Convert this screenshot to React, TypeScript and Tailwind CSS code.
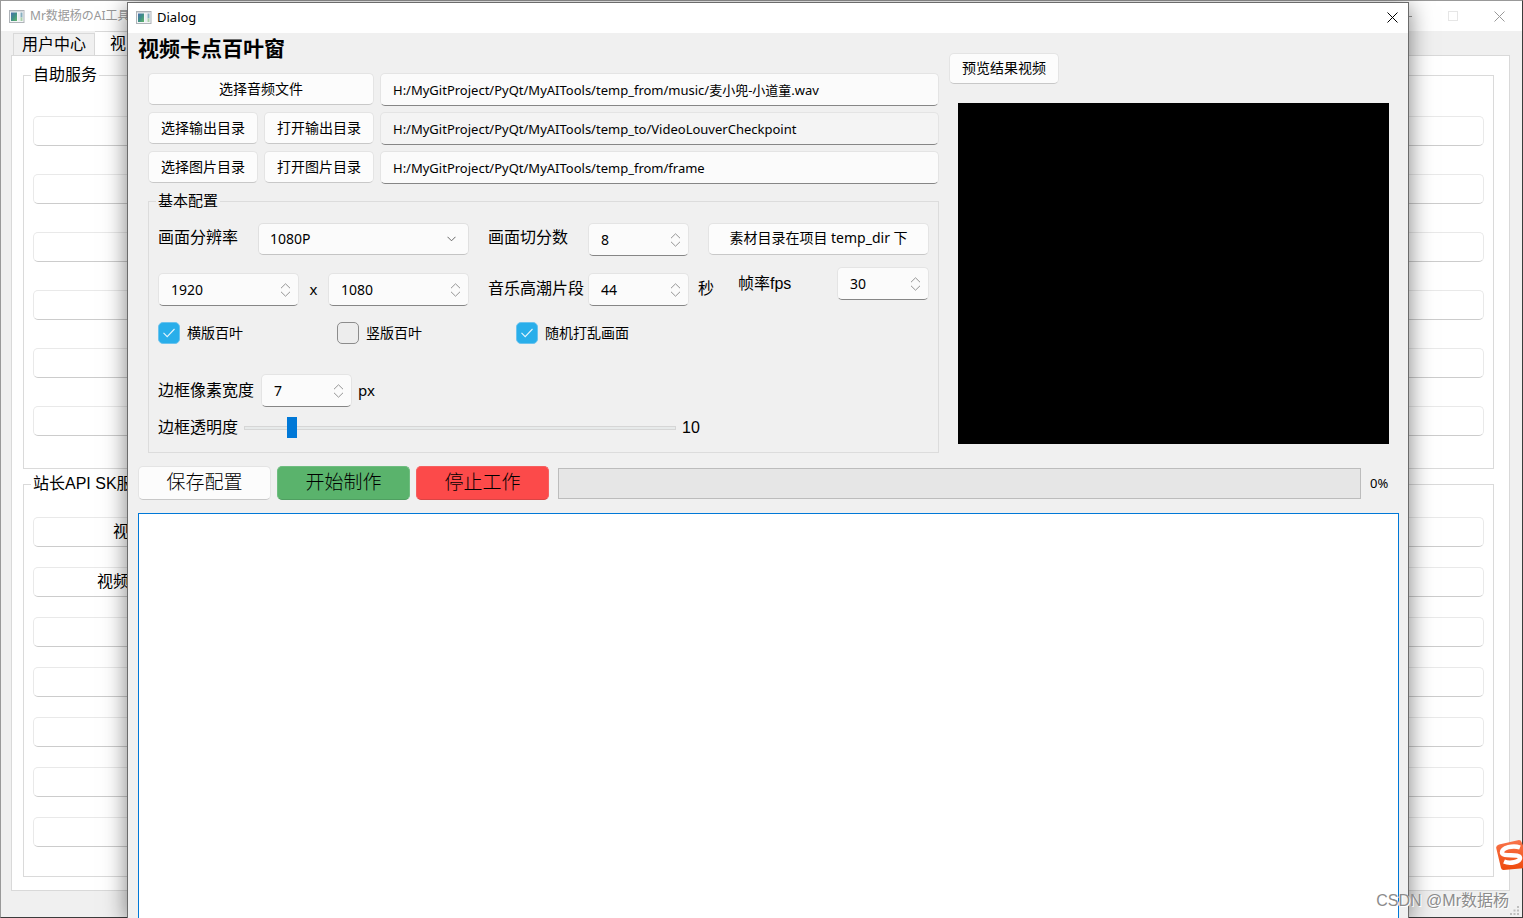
import React, { useState } from "react";

const UI = "font-['Noto_Sans','Noto_Sans_CJK_SC',sans-serif]";
const ARIAL = "font-['Liberation_Sans','Noto_Sans_CJK_SC',sans-serif]";

const fieldFrame =
  "rounded-[5px] border border-[#e4e4e4] border-b-[#868686] bg-[#fbfbfb]";
const buttonFrame =
  "rounded-[5px] border border-[#e4e4e4] border-b-[#c8c8c8] bg-[#fcfcfc] pb-[2px] hover:bg-white";

function AppIcon({ id }: { id: string }) {
  return (
    <svg width="16" height="13" viewBox="0 0 16 13" aria-hidden="true" className="shrink-0">
      <defs>
        <linearGradient id={id} x1="0" y1="0" x2="1" y2="1">
          <stop offset="0" stopColor="#4a6fb0" />
          <stop offset="0.5" stopColor="#3f8f86" />
          <stop offset="1" stopColor="#62b567" />
        </linearGradient>
      </defs>
      <rect x="0.5" y="0.5" width="14.5" height="12" fill="#f4f6f7" stroke="#aeb3b8" />
      <rect x="1" y="1" width="13.5" height="1" fill="#d5d9dd" />
      <rect x="2" y="2.5" width="6" height="8.5" fill={`url(#${id})`} />
      <rect x="9" y="2.5" width="2" height="8.5" fill="#e9edef" />
      <rect x="11.5" y="2.5" width="2" height="5" fill="#86aebf" />
      <rect x="11.5" y="7.5" width="2" height="3.5" fill="#a9cfa9" />
    </svg>
  );
}

function CloseIcon() {
  return (
    <svg width="11" height="11" viewBox="0 0 11 11" fill="none" stroke="currentColor" aria-hidden="true">
      <path d="M0.5 0.5l10 10M10.5 0.5l-10 10" />
    </svg>
  );
}

function Spin({ id, value, label, className }: { id: string; value: number; label?: string; className: string }) {
  const [v, setV] = useState(value);
  return (
    <div className={`flex h-[33px] shrink-0 items-center pl-3 pr-[7px] ${fieldFrame} ${className}`}>
      <input
        id={id}
        type="number"
        aria-label={label}
        value={v}
        onChange={(e) => setV(Number(e.target.value))}
        className={`min-w-0 flex-1 bg-transparent text-[14px] leading-5 outline-none [appearance:textfield] [&::-webkit-inner-spin-button]:appearance-none ${UI}`}
      />
      <div className="flex flex-col gap-[2px] text-[#949494]">
        <button type="button" aria-label="+" onClick={() => setV(v + 1)}>
          <svg width="11" height="6" viewBox="0 0 11 6" fill="none" stroke="currentColor" className="block">
            <path d="M1 5.2L5.5 0.8L10 5.2" />
          </svg>
        </button>
        <button type="button" aria-label="-" onClick={() => setV(v - 1)}>
          <svg width="11" height="6" viewBox="0 0 11 6" fill="none" stroke="currentColor" className="block">
            <path d="M1 0.8L5.5 5.2L10 0.8" />
          </svg>
        </button>
      </div>
    </div>
  );
}

function Check({ label, defaultChecked }: { label: string; defaultChecked?: boolean }) {
  return (
    <label className="flex w-[179px] items-center gap-[7px] text-[14px] leading-5">
      <span className="grid size-[22px] place-items-center">
        <input
          type="checkbox"
          defaultChecked={defaultChecked}
          className="peer col-start-1 row-start-1 size-[22px] appearance-none rounded-[5px] border border-[#8c8c8c] bg-[#ededed] checked:border-[#6cc3ee] checked:bg-[#29aeea]"
        />
        <svg
          width="12"
          height="10"
          viewBox="0 0 12 10"
          fill="none"
          stroke="#e4f5fd"
          className="pointer-events-none col-start-1 row-start-1 hidden peer-checked:block"
          aria-hidden="true"
        >
          <path d="M0.5 4.8L4.2 8.6L11.5 1" strokeWidth="1.1" />
        </svg>
      </span>
      {label}
    </label>
  );
}

function PathField({ value, label, readOnly }: { value: string; label: string; readOnly?: boolean }) {
  return (
    <input
      type="text"
      aria-label={label}
      defaultValue={value}
      readOnly={readOnly}
      className={`h-[33px] min-w-0 flex-1 px-3 text-[13px] outline-none read-only:bg-[#f4f4f4] ${fieldFrame}`}
    />
  );
}

function ServiceGroup({
  title,
  labels,
  className,
}: {
  title: string;
  labels: { text: string; pad: string }[];
  className: string;
}) {
  return (
    <fieldset className="border border-[#dadada] px-[9px]">
      <legend className="ml-[-2px] whitespace-nowrap px-[2px] text-[16px] leading-5">{title}</legend>
      <div className={`flex flex-col ${className}`}>
        {labels.map((l, i) => (
          <button
            key={i}
            type="button"
            aria-label={l.text || title}
            className={`h-[30px] rounded-[5px] border border-[#e9e9e9] border-b-[#cccccc] bg-white text-left text-[16px] leading-5 ${l.pad}`}
          >
            {l.text}
          </button>
        ))}
      </div>
    </fieldset>
  );
}

const blank = { text: "", pad: "px-4" };

function MainWindow() {
  return (
    <div className={`flex h-full flex-col border border-[#999] border-b-[#3c3c3c] border-r-[#3c3c3c] bg-[#f0f0f0] text-black ${ARIAL}`}>
      <header className="flex h-[30px] shrink-0 items-center bg-white pl-2 pr-[17px] text-[#999]">
        <AppIcon id="mainIcon" />
        <span className={`ml-[5px] text-[12px] leading-4 ${UI}`}>Mr数据杨のAI工具</span>
        <div className="ml-auto flex items-center gap-9">
          <button type="button" aria-label="最小化">
            <svg width="11" height="11" viewBox="0 0 11 11" stroke="currentColor" className="block" aria-hidden="true">
              <path d="M0 5.5h11" />
            </svg>
          </button>
          <button type="button" aria-label="最大化" className="text-[#e6e6e6]">
            <svg width="10" height="10" viewBox="0 0 10 10" fill="none" stroke="currentColor" className="block" aria-hidden="true">
              <rect x="0.5" y="0.5" width="9" height="9" />
            </svg>
          </button>
          <button type="button" aria-label="关闭">
            <CloseIcon />
          </button>
        </div>
      </header>
      <nav className="flex h-6 shrink-0 items-end pl-3 text-[16px] leading-5">
        <button type="button" className="h-[22px] border border-b-0 border-[#d9d9d9] px-2">
          用户中心
        </button>
        <button type="button" className="h-6 border border-b-0 border-l-0 border-[#d9d9d9] bg-white px-[15px]">
          视
        </button>
      </nav>
      <main className="ml-[10px] mr-3 flex flex-col gap-[5px] border border-[#d9d9d9] bg-white pb-[13px] pl-[11px] pr-[15px] pt-[9px]">
        <ServiceGroup
          title="自助服务"
          labels={[blank, blank, blank, blank, blank, blank]}
          className="gap-7 pb-8 pt-[31px]"
        />
        <ServiceGroup
          title="站长API SK服"
          labels={[{ text: "视", pad: "pl-[79px]" }, { text: "视频", pad: "pl-[63px]" }, blank, blank, blank, blank, blank]}
          className="gap-5 pb-[29px] pt-[23px]"
        />
      </main>
    </div>
  );
}

function Dialog() {
  const [opacity, setOpacity] = useState(10);
  return (
    <section
      role="dialog"
      aria-label="Dialog"
      className={`absolute bottom-0 left-[127px] right-[114px] top-[2px] flex flex-col border border-b-0 border-[#6b6b6b] bg-[#f0f0f0] text-black shadow-[0_4px_22px_rgba(0,0,0,0.5)] ${UI}`}
    >
      <header className="flex h-[30px] shrink-0 items-center bg-white pb-[2px] pl-2 pr-[10px]">
        <AppIcon id="dialogIcon" />
        <span className="ml-[5px] text-[13px] leading-5">Dialog</span>
        <button type="button" aria-label="关闭" className="ml-auto">
          <CloseIcon />
        </button>
      </header>

      <div className="flex min-h-0 flex-1 flex-col pl-[10px] pr-[9px]">
        <div className="flex gap-[10px]">
          <div className="min-w-0 flex-1">
            <h1 className="mb-[10px] text-[21px] font-bold leading-[30px]">视频卡点百叶窗</h1>
            <div className="pl-[10px]">
              <div className="flex flex-col gap-[6px]">
                <div className="flex gap-[6px]">
                  <button type="button" className={`h-8 w-[226px] text-[14px] ${buttonFrame}`}>
                    选择音频文件
                  </button>
                  <PathField label="音频文件" value="H:/MyGitProject/PyQt/MyAITools/temp_from/music/麦小兜-小道童.wav" />
                </div>
                <div className="flex gap-[6px]">
                  <div className="grid w-[226px] grid-cols-2 gap-[6px]">
                    <button type="button" className={`h-8 text-[14px] ${buttonFrame}`}>选择输出目录</button>
                    <button type="button" className={`h-8 text-[14px] ${buttonFrame}`}>打开输出目录</button>
                  </div>
                  <PathField label="输出目录" readOnly value="H:/MyGitProject/PyQt/MyAITools/temp_to/VideoLouverCheckpoint" />
                </div>
                <div className="flex gap-[6px]">
                  <div className="grid w-[226px] grid-cols-2 gap-[6px]">
                    <button type="button" className={`h-8 text-[14px] ${buttonFrame}`}>选择图片目录</button>
                    <button type="button" className={`h-8 text-[14px] ${buttonFrame}`}>打开图片目录</button>
                  </div>
                  <PathField label="图片目录" value="H:/MyGitProject/PyQt/MyAITools/temp_from/frame" />
                </div>
              </div>

              <fieldset className={`mt-[7px] border border-[#dcdcdc] px-[9px] pb-[14px] text-[16px] leading-5 ${ARIAL}`}>
                <legend className="ml-[-2px] px-[2px] text-[15px] leading-5">基本配置</legend>

                <div className="flex items-start pt-3">
                  <label htmlFor="resolution" className="w-[100px] shrink-0 leading-[30px]">画面分辨率</label>
                  <div className="grid w-[211px] shrink-0 items-center">
                    <select
                      id="resolution"
                      className={`col-start-1 row-start-1 h-8 appearance-none rounded-[5px] border border-[#e0e0e0] border-b-[#c4c4c4] bg-[#fbfbfb] pl-[11px] text-[14px] outline-none ${UI}`}
                    >
                      <option>1080P</option>
                    </select>
                    <svg
                      width="9"
                      height="6"
                      viewBox="0 0 9 6"
                      fill="none"
                      stroke="#666"
                      className="pointer-events-none col-start-1 row-start-1 mr-[13px] justify-self-end"
                      aria-hidden="true"
                    >
                      <path d="M0.5 0.8L4.5 4.8L8.5 0.8" />
                    </svg>
                  </div>
                  <label htmlFor="slices" className="ml-[19px] w-[100px] shrink-0 leading-[30px]">画面切分数</label>
                  <Spin id="slices" value={8} className="w-[101px]" />
                  <button type="button" className={`ml-[19px] h-8 flex-1 text-[14px] ${buttonFrame} ${UI}`}>
                    素材目录在项目 temp_dir 下
                  </button>
                </div>

                <div className="mt-[11px] flex items-start">
                  <div className="flex items-center pt-[6px]">
                    <Spin id="width" label="宽度" value={1920} className="w-[141px]" />
                    <span className={`w-[29px] pb-[2px] text-center text-[15px] leading-5 ${UI}`}>x</span>
                    <Spin id="height" label="高度" value={1080} className="w-[141px]" />
                    <label htmlFor="climax" className="ml-[19px] w-[100px] shrink-0 pb-[2px]">音乐高潮片段</label>
                    <Spin id="climax" value={44} className="w-[101px]" />
                    <span className="ml-[9px] w-10 pb-[2px]">秒</span>
                  </div>
                  <div className="flex flex-1 items-center justify-between">
                    <label htmlFor="fps">帧率fps</label>
                    <Spin id="fps" value={30} className="w-[92px]" />
                  </div>
                </div>

                <div className={`mt-4 flex ${UI}`}>
                  <Check label="横版百叶" defaultChecked />
                  <Check label="竖版百叶" />
                  <Check label="随机打乱画面" defaultChecked />
                </div>

                <div className="mt-[30px] flex items-center">
                  <label htmlFor="border" className="w-[103px]">边框像素宽度</label>
                  <Spin id="border" value={7} className="w-[91px]" />
                  <span className={`ml-[6px] pb-[2px] text-[15px] ${UI}`}>px</span>
                </div>

                <div className="mt-[10px] flex h-[21px] items-center">
                  <label htmlFor="opacity" className="w-[86px]">边框透明度</label>
                  <input
                    id="opacity"
                    type="range"
                    min={0}
                    max={100}
                    value={opacity}
                    onChange={(e) => setOpacity(Number(e.target.value))}
                    className="h-[21px] w-[432px] appearance-none bg-transparent [&::-webkit-slider-runnable-track]:h-1 [&::-webkit-slider-runnable-track]:border [&::-webkit-slider-runnable-track]:border-[#d6d6d6] [&::-webkit-slider-runnable-track]:bg-[#e7eaea] [&::-webkit-slider-thumb]:-mt-[10px] [&::-webkit-slider-thumb]:h-[21px] [&::-webkit-slider-thumb]:w-[10px] [&::-webkit-slider-thumb]:appearance-none [&::-webkit-slider-thumb]:bg-[#0078d7]"
                  />
                  <output htmlFor="opacity" className="ml-[6px]">{opacity}</output>
                </div>
              </fieldset>
            </div>
          </div>

          <div className="w-[450px] shrink-0 pt-5">
            <button type="button" className={`h-[31px] w-[110px] text-[14px] ${buttonFrame}`}>
              预览结果视频
            </button>
            <div className="ml-[9px] mr-[10px] mt-[19px] h-[341px] bg-black" />
          </div>
        </div>

        <div className="mt-[13px] flex items-center gap-[6px] text-[19px]">
          <button type="button" className={`h-[34px] w-[133px] font-light ${buttonFrame}`}>保存配置</button>
          <button type="button" className="h-[34px] w-[133px] rounded-[5px] border border-[#6fbd80] border-b-[#4f9f61] bg-[#5ab36c] pb-[2px] font-light">
            开始制作
          </button>
          <button type="button" className="h-[34px] w-[133px] rounded-[5px] border border-[#f65f5f] border-b-[#d94545] bg-[#fc4a4a] pb-[2px] font-light">
            停止工作
          </button>
          <progress
            value={0}
            max={100}
            aria-label="进度"
            className="ml-[3px] h-[31px] min-w-0 flex-1 appearance-none border border-[#bcbcbc] bg-[#e6e6e6] [&::-webkit-progress-bar]:bg-[#e6e6e6] [&::-webkit-progress-value]:bg-[#06b025]"
          />
          <span className="ml-[3px] w-[29px] text-[13px] leading-4">0%</span>
        </div>

        <textarea
          aria-label="日志"
          className="mt-[13px] min-h-0 flex-1 resize-none border-x border-t border-[#0078d7] bg-white p-1 text-[14px] outline-none"
        />
      </div>
    </section>
  );
}

export default function App() {
  return (
    <div className="relative h-screen overflow-hidden">
      <MainWindow />
      <Dialog />

      <svg className="absolute right-0 top-[838px]" width="28" height="34" viewBox="0 0 28 34" aria-hidden="true">
        <defs>
          <linearGradient id="badge" x1="0" y1="0" x2="0" y2="1">
            <stop offset="0" stopColor="#f9744b" />
            <stop offset="1" stopColor="#ee4a0c" />
          </linearGradient>
        </defs>
        <path d="M4 6.5L24 2Q26 2 26.500 4L30 12V30L8.500 32Q6.500 32 6 30L1.200 10Q0.800 7.500 4 6.500Z" fill="url(#badge)" />
        <path
          d="M25 9.500C18 7 7 9.500 7 14.500C7 19.500 25 15 25 20C25 24 15 26 9 23.500"
          fill="none"
          stroke="#fff"
          strokeWidth="4.500"
        />
      </svg>

      <svg className="absolute bottom-[2px] right-[3px]" width="10" height="10" viewBox="0 0 10 10" fill="#bfbfbf" aria-hidden="true">
        <path d="M7 0h2v2h-2zM7 3.500h2v2h-2zM3.500 3.500h2v2h-2zM7 7h2v2h-2zM3.500 7h2v2h-2zM0 7h2v2h-2z" />
      </svg>

      <span
        className={`pointer-events-none absolute bottom-[5px] right-[14px] text-[16px] leading-6 text-[#8c8c8c] [text-shadow:1px_1px_0_#fff] ${ARIAL}`}
      >
        CSDN @Mr数据杨
      </span>
    </div>
  );
}
